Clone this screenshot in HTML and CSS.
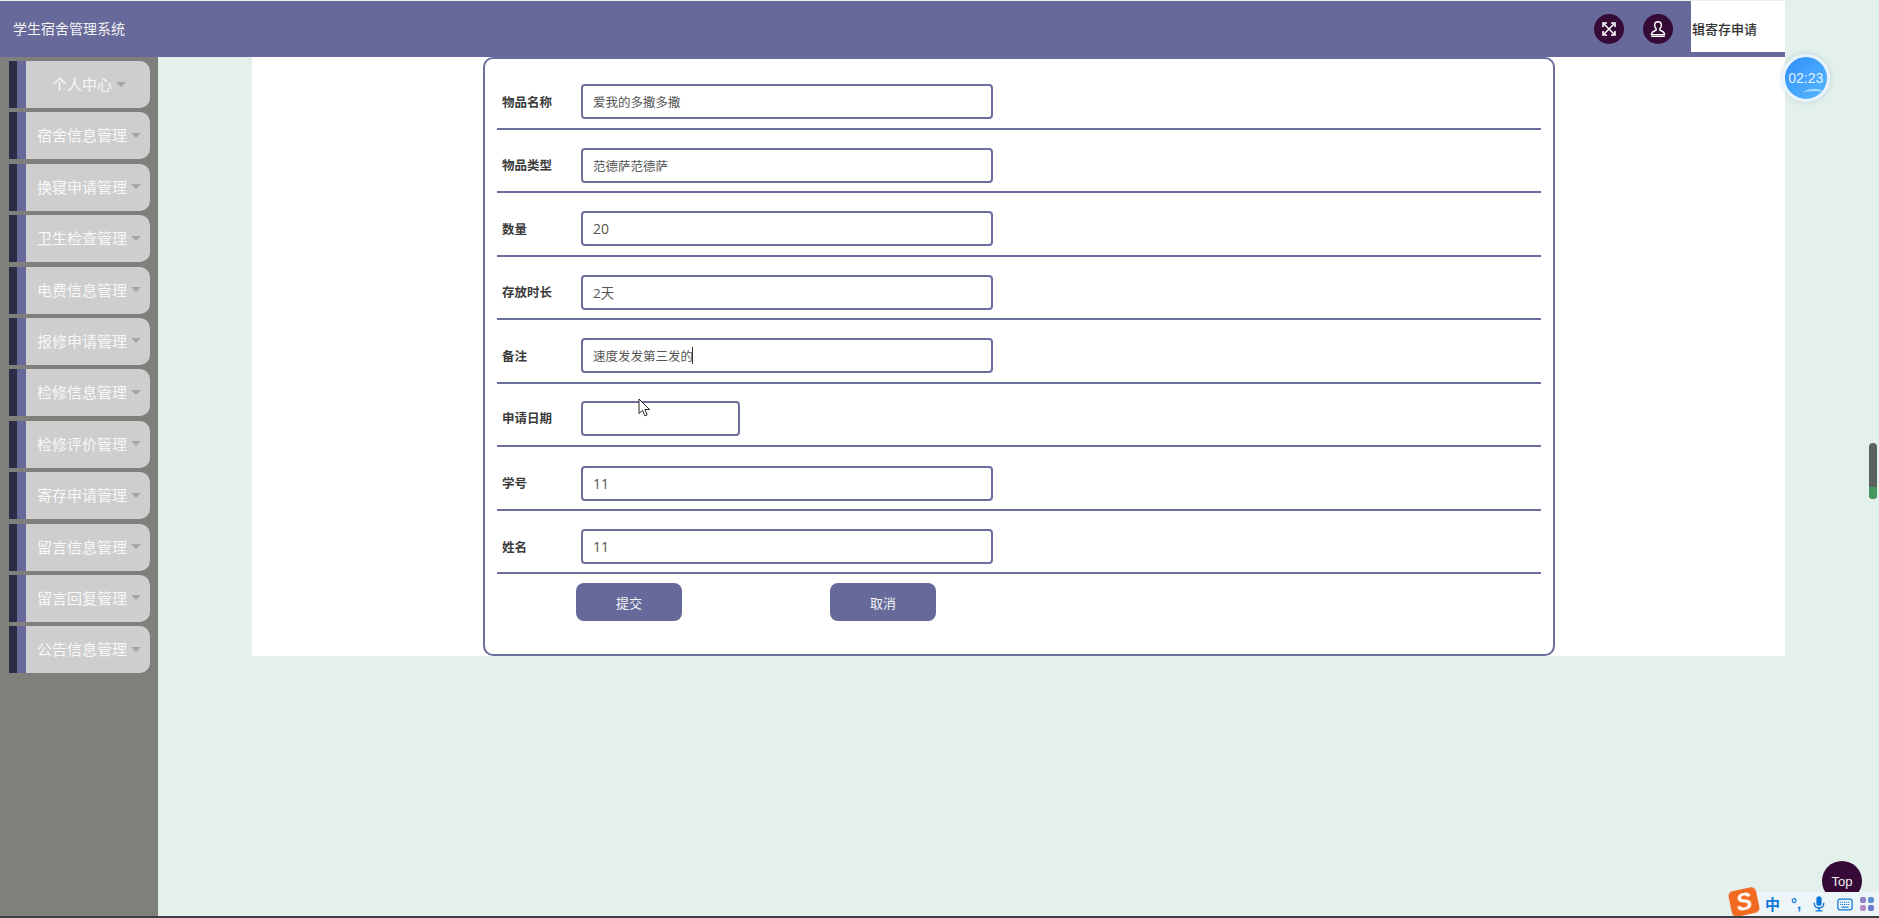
FILE: index.html
```html
<!DOCTYPE html>
<html lang="zh-CN">
<head>
<meta charset="utf-8">
<title>学生宿舍管理系统</title>
<link rel="stylesheet" href="styles.css">
</head>
<body>
<div class="page">
  <header class="topbar">
    <div class="brand">学生宿舍管理系统</div>
    <div class="top-actions">
      <span class="round-btn">
        <svg viewBox="0 0 16 16" width="16" height="16" fill="none" stroke="#fff" stroke-width="1.5"><path d="M3 3l10 10M13 3L3 13"/><path d="M2 6V2h4M10 2h4v4M14 10v4h-4M6 14H2v-4" stroke-width="1.6"/></svg>
      </span>
      <span class="round-btn">
        <svg viewBox="0 0 16 16" width="18" height="18" fill="none" stroke="#fff" stroke-width="1.3"><path d="M8 1.500c-1.900 0-3 1.400-3 3.200 0 1.300.5 2.300 1.300 3v1.400c-1 .6-3.600 1-3.900 2.700l-.2 1.200h11.600l-.2-1.200c-.3-1.700-2.900-2.100-3.900-2.700V7.700c.8-.7 1.300-1.700 1.300-3 0-1.800-1.100-3.200-3-3.200z"/><path d="M2 14.500h12"/></svg>
      </span>
    </div>
    <div class="tab">辑寄存申请</div>
  </header>
  <div class="layout">
    <nav class="sidebar">
      <div class="nav-item"><span class="nav-label">个人中心</span></div>
      <div class="nav-item"><span class="nav-label">宿舍信息管理</span></div>
      <div class="nav-item"><span class="nav-label">换寝申请管理</span></div>
      <div class="nav-item"><span class="nav-label">卫生检查管理</span></div>
      <div class="nav-item"><span class="nav-label">电费信息管理</span></div>
      <div class="nav-item"><span class="nav-label">报修申请管理</span></div>
      <div class="nav-item"><span class="nav-label">检修信息管理</span></div>
      <div class="nav-item"><span class="nav-label">检修评价管理</span></div>
      <div class="nav-item"><span class="nav-label">寄存申请管理</span></div>
      <div class="nav-item"><span class="nav-label">留言信息管理</span></div>
      <div class="nav-item"><span class="nav-label">留言回复管理</span></div>
      <div class="nav-item"><span class="nav-label">公告信息管理</span></div>
    </nav>
    <main class="content">
      <div class="panel">
        <form class="card">
          <div class="row"><label class="row-label">物品名称</label><input class="field" value="爱我的多撒多撒"></div>
          <div class="row"><label class="row-label">物品类型</label><input class="field" value="范德萨范德萨"></div>
          <div class="row"><label class="row-label">数量</label><input class="field field-num" value="20"></div>
          <div class="row"><label class="row-label">存放时长</label><input class="field field-mid" value="2天"></div>
          <div class="row"><label class="row-label">备注</label><span class="field-wrap"><input class="field" value="速度发发第三发的"><i class="caret"></i></span></div>
          <div class="row row-date"><label class="row-label">申请日期</label><input class="field field-short" value=""></div>
          <div class="row"><label class="row-label">学号</label><input class="field field-num" value="11"></div>
          <div class="row"><label class="row-label">姓名</label><input class="field field-num" value="11"></div>
          <div class="actions">
            <button type="button" class="btn">提交</button>
            <button type="button" class="btn">取消</button>
          </div>
        </form>
      </div>
    </main>
  </div>
</div>

<svg class="cursor" viewBox="0 0 14 20" width="14" height="20"><path d="M1 1v14.500l3.500-3.200 2.400 5.600 2.300-1-2.400-5.400h4.700z" fill="#fff" stroke="#222" stroke-width="1"/></svg>

<div class="timer">02:23</div>
<div class="scroll-pill"><span class="scroll-green"></span></div>
<div class="to-top">Top</div>

<div class="ime">
  <span class="ime-logo">S</span>
  <span class="ime-zh">中</span>
  <span class="ime-punct">°,</span>
  <svg viewBox="0 0 16 20" width="14" height="18" fill="#0a78d8"><rect x="5" y="1" width="6" height="11" rx="3"/><path d="M2.500 8.500c0 3.500 2.200 6 5.500 6s5.500-2.500 5.500-6" fill="none" stroke="#0a78d8" stroke-width="1.600"/><path d="M7.200 14h1.600v3H12v1.600H4V17h3.200z"/></svg>
  <svg viewBox="0 0 18 14" width="16" height="13" fill="none" stroke="#0a78d8"><rect x="1" y="1" width="16" height="12" rx="2" stroke-width="1.400"/><path d="M3.500 4.500h11M3.500 7h11" stroke-width="1.300" stroke-dasharray="1.300 .9"/><path d="M5 10h8" stroke-width="1.300"/></svg>
  <span class="ime-grid"><i class="g1"></i><i class="g2"></i><i class="g3"></i><i class="g4"></i></span>
</div>
<div class="bottom-line"></div>
</body>
</html>
```

FILE: styles.css
```css
* { box-sizing: border-box; }
html, body { margin: 0; padding: 0; height: 100%; overflow: hidden; }
body {
  background: #e3f0eb;
  font-family: "Noto Sans CJK SC", "Noto Sans", sans-serif;
  color: #333;
}
.page { width: 1785px; height: 918px; display: flex; flex-direction: column; }

.topbar {
  height: 56px;
  flex: none;
  margin-top: 1px;
  display: flex;
  align-items: flex-start;
  background: #666999;
  position: relative;
}
.brand {
  color: #f2f2f6;
  font-size: 14px;
  line-height: 20px;
  padding: 17px 0 0 13px;
  flex: 1;
}
.top-actions { display: flex; gap: 19px; padding: 13px 18px 0 0; }
.round-btn {
  width: 30px; height: 30px; border-radius: 50%;
  background: #350a36;
  display: flex; align-items: center; justify-content: center;
}
.tab {
  width: 94px; height: 51px;
  background: #fff;
  color: #333;
  font-size: 13px;
  font-weight: 500;
  line-height: 20px;
  padding: 18px 0 0 1px;
  white-space: nowrap;
}

.layout { flex: 1; display: flex; min-height: 0; }
.sidebar {
  width: 158px; flex: none;
  background: #7f807c;
  padding: 4px 8px 0 9px;
  display: flex; flex-direction: column; gap: 4.400px;
}
.nav-item {
  height: 47px;
  border-left: 8px solid #2b2d46;
  border-radius: 0 10px 10px 0;
  background: linear-gradient(90deg, #666999 0, #666999 9px, #cdcecd 9px);
  display: flex; align-items: center; justify-content: flex-end;
  padding: 0 9px 1px 9px;
}
.nav-label {
  color: #f8f8f8;
  font-size: 15px;
  line-height: 20px;
  white-space: nowrap;
  display: flex; align-items: center; gap: 4px;
}
.nav-label::after {
  content: "";
  width: 0; height: 0;
  border-left: 5px solid transparent;
  border-right: 5px solid transparent;
  border-top: 5px solid #a5a5a5;
}
.nav-item:first-child .nav-label { margin-right: 15px; }

.content { flex: 1; padding: 0 0 0 94px; min-width: 0; }
.panel {
  height: 599px;
  background: #fff;
  padding: 0 230px 0 231px;
}
.card {
  height: 599px;
  border: 2px solid #6b6e9d;
  border-radius: 10px;
  background: #fff;
  padding: 7px 12px 0;
}
.row {
  height: 63.550px;
  border-bottom: 2px solid #6b6e9d;
  padding-top: 10px;
  display: flex; align-items: center;
}
.row-date { padding-top: 7px; }
.row-label {
  width: 84px; flex: none;
  font-size: 12.500px;
  font-weight: 700;
  color: #3b3b3b;
  padding-left: 5px;
  line-height: 18px;
}
.field-wrap { position: relative; display: block; }
.field {
  display: block;
  width: 412px; height: 35px;
  border: 2px solid #6b6e9d;
  border-radius: 4px;
  background: #fff;
  padding: 0 10px;
  font-family: "Open Sans", "Noto Sans CJK SC", sans-serif;
  font-size: 12.500px;
  color: #555;
  outline: none;
}
.field-num { font-size: 14px; }
.field-mid { font-size: 13.500px; }
.field-short { width: 159px; }
.caret {
  position: absolute;
  left: 111px; top: 9px;
  width: 1px; height: 17px;
  background: #333;
}
.actions {
  display: flex;
  gap: 148px;
  padding: 9px 0 0 79px;
}
.btn {
  width: 106px; height: 38px;
  border: 0;
  border-radius: 8px;
  background: #666999;
  color: #f4f4f8;
  font-family: "Noto Sans CJK SC", sans-serif;
  font-size: 13px;
}

.cursor { position: fixed; left: 638px; top: 398px; }
.timer {
  position: fixed; left: 1782px; top: 54px;
  width: 48px; height: 48px; border-radius: 50%;
  border: 3px solid #eaf5fb;
  background: linear-gradient(135deg, #2f8ffb, #58b8ff);
  box-shadow: 0 0 5px rgba(120, 160, 190, .4);
  color: #eaf6ff;
  font-family: "Liberation Sans", sans-serif;
  font-size: 14px;
  display: flex; align-items: center; justify-content: center;
  overflow: hidden;
}
.timer::after {
  content: "";
  position: absolute;
  left: 18px; right: 2px; bottom: 2px;
  height: 6px;
  border-top: 2px solid rgba(210, 240, 255, .7);
  border-radius: 50% 50% 0 0;
}
.scroll-pill {
  position: fixed; left: 1869px; top: 443px;
  width: 8px; height: 56px; border-radius: 4px;
  background: #5b615f;
  overflow: hidden;
  display: flex; align-items: flex-end;
}
.scroll-green { display: block; width: 100%; height: 12px; background: #46985f; }
.to-top {
  position: fixed; left: 1822px; top: 861px;
  width: 40px; height: 40px; border-radius: 50%;
  background: #350a36;
  color: #f1f1f1;
  font-family: "Liberation Sans", sans-serif;
  font-size: 13px;
  display: flex; align-items: center; justify-content: center;
}
.ime {
  position: fixed; left: 1740px; top: 892px;
  width: 139px; height: 24px;
  background: #eef5f8;
  display: flex; align-items: center; gap: 11px;
  padding-left: 25px;
}
.ime-logo {
  position: absolute; left: -10px; top: -3px;
  width: 28px; height: 26px;
  background: #f26a21;
  border-radius: 5px;
  transform: rotate(-12deg);
  color: #fff;
  font-family: "Liberation Sans", sans-serif;
  font-size: 24px; font-weight: 700; font-style: italic;
  line-height: 26px; text-align: center;
}
.ime-zh { color: #0a78d8; font-size: 15px; font-weight: 700; line-height: 20px; }
.ime-punct { color: #0a78d8; font-family: "Liberation Sans", sans-serif; font-size: 15px; font-weight: 700; line-height: 20px; }
.ime-grid { display: grid; grid-template-columns: 6px 6px; gap: 2px; margin-left: -4px; }
.ime-grid i { display: block; width: 6px; height: 6px; border-radius: 2px; }
.g1 { background: #8f7fc8; }
.g2 { background: #5f8fd0; }
.g3 { background: #b58ac0; }
.g4 { background: #6a78c8; }
.bottom-line {
  position: fixed; left: 0; right: 0; bottom: 0;
  height: 2px;
  background: #3a3f44;
}
```
